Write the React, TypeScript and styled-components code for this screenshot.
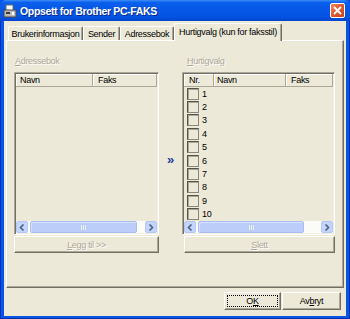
import React from "react";
import styled, { createGlobalStyle } from "styled-components";

const Global = createGlobalStyle`
  html, body { margin: 0; padding: 0; background: #ffffff; }
  body { font-family: "Liberation Sans", Arial, sans-serif; font-size: 9px; letter-spacing: -0.3px; color: #000; }
  #root { width: 350px; height: 319px; }
  * { box-sizing: border-box; }
`;

const Window = styled.div`
  width: 350px;
  height: 319px;
  display: flex;
  flex-direction: column;
  background: #0855e4;
`;

const TitleBar = styled.div`
  height: 21px;
  display: flex;
  align-items: center;
  gap: 3px;
  padding: 0 5px 0 3px;
  background: linear-gradient(to bottom, #3d8ef7 0%, #0a60ec 12%, #0657e6 45%, #0453e2 80%, #0346cc 100%);
  border-radius: 6px 6px 0 0;
`;

const Title = styled.div`
  flex: 1;
  color: #ffffff;
  font-weight: bold;
  font-size: 10.5px;
  letter-spacing: -0.35px;
  text-shadow: 1px 1px #0a2a8a;
  white-space: nowrap;
`;

const CloseButton = styled.div`
  width: 15px;
  height: 15px;
  border: 1px solid #ffffff;
  border-radius: 2px;
  background: linear-gradient(135deg, #f08a64 0%, #e05a2f 45%, #c9411d 100%);
  display: flex;
  align-items: center;
  justify-content: center;
`;

const Frame = styled.div`
  flex: 1;
  display: flex;
  padding: 0 4px 3px 4px;
  background: #0855e4;
  box-shadow: inset 1px 0 #0030c0, inset -1px 0 #0030b0, inset 0 -1px #0030b0;
`;

const Body = styled.div`
  flex: 1;
  display: flex;
  flex-direction: column;
  background: #ece9d8;
`;

const TabRow = styled.div`
  display: flex;
  align-items: flex-end;
  height: 17px;
  margin-top: 2px;
  padding-left: 4px;
`;

const Tab = styled.div<{ $w: number; $active?: boolean }>`
  position: relative;
  width: ${(p) => p.$w}px;
  height: ${(p) => (p.$active ? 18 : 14)}px;
  margin-bottom: ${(p) => (p.$active ? -1 : 0)}px;
  z-index: ${(p) => (p.$active ? 2 : 0)};
  display: flex;
  align-items: center;
  justify-content: center;
  padding-bottom: ${(p) => (p.$active ? 2 : 0)}px;
  background: #ece9d8;
  border-top: 1px solid #ffffff;
  border-left: 1px solid #ffffff;
  border-right: 1px solid #716f64;
  box-shadow: inset -1px 0 #aca899;
  border-radius: 2px 2px 0 0;
  white-space: nowrap;
`;

const Panel = styled.div`
  height: 248px;
  margin: 0 2px;
  display: flex;
  padding: 14px 8px 0 7px;
  border-top: 1px solid #ffffff;
  border-left: 1px solid #ffffff;
  border-right: 1px solid #716f64;
  border-bottom: 1px solid #716f64;
  box-shadow: inset -1px -1px #aca899;
`;

const Column = styled.div<{ $w: number }>`
  width: ${(p) => p.$w}px;
  display: flex;
  flex-direction: column;
`;

const Middle = styled.div`
  width: 23px;
  padding: 97px 0 0 8px;
  color: #1b3f9e;
  font-weight: bold;
  font-size: 13px;
  letter-spacing: 0;
`;

const GroupLabel = styled.div<{ $indent: number }>`
  height: 13px;
  line-height: 13px;
  margin-bottom: 4px;
  padding-left: ${(p) => p.$indent}px;
  color: #aca899;
  text-shadow: 1px 1px #ffffff;
`;

const List = styled.div`
  height: 163px;
  display: flex;
  flex-direction: column;
  padding: 1px;
  background: #ece9d8;
  border-top: 1px solid #aca899;
  border-left: 1px solid #aca899;
  border-right: 1px solid #ffffff;
  border-bottom: 1px solid #ffffff;
  box-shadow: inset 1px 1px #716f64, inset -1px -1px #f1efe2;
`;

const Header = styled.div`
  display: flex;
  height: 13px;
  border-bottom: 1px solid #aca899;
`;

const HeaderCell = styled.div<{ $w?: number; $pad: number }>`
  ${(p) => (p.$w ? `width: ${p.$w}px;` : "flex: 1;")}
  height: 12px;
  line-height: 12px;
  padding-left: ${(p) => p.$pad}px;
  background: #ece9d8;
  border-right: 1px solid #aca899;
  box-shadow: inset 1px 1px #ffffff;
  white-space: nowrap;
`;

const Rows = styled.div`
  flex: 1;
  display: flex;
  flex-direction: column;
`;

const Row = styled.div`
  height: 13.4px;
  display: flex;
  align-items: center;
  gap: 3px;
  padding-left: 3px;
`;

const CheckBox = styled.div`
  width: 12px;
  height: 12px;
  background: #ece9d8;
  border-top: 1px solid #555349;
  border-left: 1px solid #555349;
  border-right: 1px solid #8a877a;
  border-bottom: 1px solid #8a877a;
  box-shadow: inset 1px 1px #aca899;
`;

const Scrollbar = styled.div`
  height: 12px;
  display: flex;
  background: #fbfbf8;
`;

const ArrowBtn = styled.div`
  width: 12px;
  height: 12px;
  display: flex;
  align-items: center;
  justify-content: center;
  background: #c4d4fb;
  border: 1px solid #b3c6f4;
  border-radius: 2px;
`;

const Thumb = styled.div<{ $w: number }>`
  width: ${(p) => p.$w}px;
  margin-left: 2px;
  height: 12px;
  display: flex;
  align-items: center;
  justify-content: center;
  gap: 1px;
  background: #bccdf9;
  border: 1px solid #a9bdf3;
  border-radius: 2px;
  box-shadow: inset 1px 1px #d6e1fc;
`;

const Grip = styled.div`
  width: 1px;
  height: 5px;
  background: #e9effd;
`;

const Track = styled.div`
  flex: 1;
`;

const PanelButton = styled.div<{ $inset: number }>`
  height: 17px;
  margin-top: 1px;
  margin-left: ${(p) => p.$inset}px;
  display: flex;
  align-items: center;
  justify-content: center;
  color: #aca899;
  text-shadow: 1px 1px #ffffff;
  border-top: 1px solid #ffffff;
  border-left: 1px solid #ffffff;
  border-right: 1px solid #716f64;
  border-bottom: 1px solid #716f64;
  box-shadow: inset -1px -1px #aca899;
`;

const ButtonRow = styled.div`
  display: flex;
  justify-content: flex-end;
  gap: 1px;
  padding: 4px 5px 0 0;
`;

const DialogButton = styled.div<{ $w: number; $focus?: boolean }>`
  width: ${(p) => p.$w}px;
  height: 18px;
  display: flex;
  align-items: center;
  justify-content: center;
  border-top: 1px solid #ffffff;
  border-left: 1px solid #ffffff;
  border-right: 1px solid #716f64;
  border-bottom: 1px solid #716f64;
  box-shadow: inset -1px -1px #aca899;
  outline: ${(p) => (p.$focus ? "1px dotted #000" : "none")};
  outline-offset: -4px;
`;

const Chevron = ({ dir }: { dir: "left" | "right" }) => (
  <svg width="6" height="7" viewBox="0 0 6 7">
    <path
      d={dir === "left" ? "M4.5 0.5 L1.5 3.5 L4.5 6.5" : "M1.5 0.5 L4.5 3.5 L1.5 6.5"}
      fill="none"
      stroke="#4d6185"
      strokeWidth="1.6"
    />
  </svg>
);

const ScrollBarView = ({ thumb }: { thumb: number }) => (
  <Scrollbar>
    <ArrowBtn>
      <Chevron dir="left" />
    </ArrowBtn>
    <Thumb $w={thumb}>
      <Grip />
      <Grip />
      <Grip />
    </Thumb>
    <Track />
    <ArrowBtn>
      <Chevron dir="right" />
    </ArrowBtn>
  </Scrollbar>
);

const TitleIcon = () => (
  <svg width="14" height="14" viewBox="0 0 14 14">
    <rect x="3" y="1" width="7" height="6" fill="#ffffff" stroke="#6a6a6a" strokeWidth="1" />
    <rect x="1" y="6" width="12" height="7" fill="#b9b9b9" stroke="#4a4a4a" strokeWidth="1" />
    <rect x="3" y="8" width="4" height="2" fill="#3c3c3c" />
    <rect x="9" y="8" width="2" height="3" fill="#ffffff" />
  </svg>
);

export default function App() {
  const rows = Array.from({ length: 10 }, (_, i) => i + 1);
  return (
    <>
      <Global />
      <Window>
        <TitleBar>
          <TitleIcon />
          <Title>Oppsett for Brother PC-FAKS</Title>
          <CloseButton>
            <svg width="9" height="9" viewBox="0 0 9 9">
              <path d="M1 1 L8 8 M8 1 L1 8" stroke="#ffffff" strokeWidth="1.8" />
            </svg>
          </CloseButton>
        </TitleBar>
        <Frame>
          <Body>
            <TabRow>
              <Tab $w={75}>Brukerinformasjon</Tab>
              <Tab $w={37}>Sender</Tab>
              <Tab $w={54}>Adressebok</Tab>
              <Tab $w={108} $active>
                Hurtigvalg (kun for faksstil)
              </Tab>
            </TabRow>
            <Panel>
              <Column $w={145}>
                <GroupLabel $indent={1}>
                  <u>A</u>dressebok
                </GroupLabel>
                <List>
                  <Header>
                    <HeaderCell $w={77} $pad={4}>
                      Navn
                    </HeaderCell>
                    <HeaderCell $pad={5}>Faks</HeaderCell>
                  </Header>
                  <Rows />
                  <ScrollBarView thumb={107} />
                </List>
                <PanelButton $inset={0}>
                  <span>
                    <u>L</u>egg til &gt;&gt;
                  </span>
                </PanelButton>
              </Column>
              <Middle>»</Middle>
              <Column $w={153}>
                <GroupLabel $indent={5}>
                  <u>H</u>urtigvalg
                </GroupLabel>
                <List>
                  <Header>
                    <HeaderCell $w={30} $pad={5}>
                      Nr.
                    </HeaderCell>
                    <HeaderCell $w={72} $pad={3}>
                      Navn
                    </HeaderCell>
                    <HeaderCell $pad={5}>Faks</HeaderCell>
                  </Header>
                  <Rows>
                    {rows.map((n) => (
                      <Row key={n}>
                        <CheckBox />
                        <span>{n}</span>
                      </Row>
                    ))}
                  </Rows>
                  <ScrollBarView thumb={106} />
                </List>
                <PanelButton $inset={2}>
                  <span>
                    <u>S</u>lett
                  </span>
                </PanelButton>
              </Column>
            </Panel>
            <ButtonRow>
              <DialogButton $w={57} $focus>
                <span>
                  O<u>K</u>
                </span>
              </DialogButton>
              <DialogButton $w={59}>
                <span>
                  Av<u>b</u>ryt
                </span>
              </DialogButton>
            </ButtonRow>
          </Body>
        </Frame>
      </Window>
    </>
  );
}
